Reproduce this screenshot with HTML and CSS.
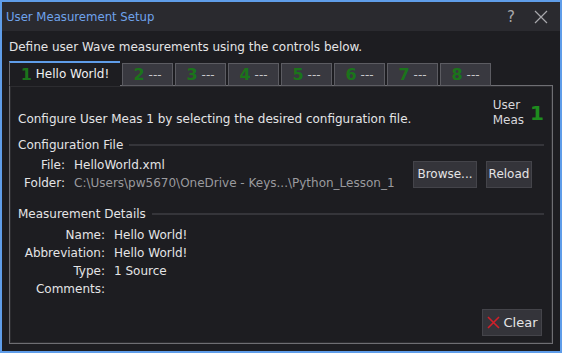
FILE: index.html
```html
<!DOCTYPE html>
<html lang="en">
  <head>
    <meta charset="UTF-8" />
    <title>User Measurement Setup</title>
    <link rel="stylesheet" href="styles.css">
  </head>
  <body>
    <div class="window">
      <div class="titlebar">
        <span class="title">User Measurement Setup</span>
        <span class="help">?</span>
        <svg class="close" width="14" height="14" viewBox="0 0 14 14">
          <path d="M1 1 L13 13 M13 1 L1 13" stroke="#a8a8ac" stroke-width="1.2" fill="none" />
        </svg>
      </div>

      <div class="intro">Define user Wave measurements using the controls below.</div>

      <div class="tabs">
        <div class="tab active"><span class="num">1</span> Hello World!</div>
        <div class="tab"><span class="num">2</span> ---</div>
        <div class="tab"><span class="num">3</span> ---</div>
        <div class="tab"><span class="num">4</span> ---</div>
        <div class="tab"><span class="num">5</span> ---</div>
        <div class="tab"><span class="num">6</span> ---</div>
        <div class="tab"><span class="num">7</span> ---</div>
        <div class="tab"><span class="num">8</span> ---</div>
      </div>

      <div class="panel">
        <div class="header">
          <span class="lead">Configure User Meas 1 by selecting the desired configuration file.</span>
          <div class="badge">
            <span class="badge-label">User<br>Meas</span>
            <span class="badge-num">1</span>
          </div>
        </div>

        <div class="section-title"><span>Configuration File</span></div>
        <div class="config">
          <div class="fields file-fields">
            <span class="label">File:</span>
            <span class="value">HelloWorld.xml</span>
            <span class="label">Folder:</span>
            <span class="value dim">C:\Users\pw5670\OneDrive - Keys...\Python_Lesson_1</span>
          </div>
          <div class="actions">
            <button class="btn browse">Browse...</button>
            <button class="btn reload">Reload</button>
          </div>
        </div>

        <div class="section-title"><span>Measurement Details</span></div>
        <div class="fields detail-fields">
          <span class="label">Name:</span>
          <span class="value">Hello World!</span>
          <span class="label">Abbreviation:</span>
          <span class="value">Hello World!</span>
          <span class="label">Type:</span>
          <span class="value">1 Source</span>
          <span class="label">Comments:</span>
          <span class="value"></span>
        </div>

        <div class="footer">
          <button class="btn clear">
            <svg class="clear-icon" width="13" height="13" viewBox="0 0 13 13">
              <path d="M1 1 L12 12 M12 1 L1 12" stroke="#d0202a" stroke-width="1.6" fill="none" />
            </svg>
            Clear
          </button>
        </div>
      </div>
    </div>
  </body>
</html>
```

FILE: styles.css
```css
html,
body {
  width: 100%;
  height: 100%;
  padding: 0;
  margin: 0;
  background-color: #1d1d21;
}

body {
  font-family: "DejaVu Sans", sans-serif;
  font-size: 12px;
  color: #e4e4e6;
}

.window {
  width: 562px;
  height: 353px;
  box-sizing: border-box;
  border: 2px solid #5f9de9;
  background-color: #1d1d21;
  display: flex;
  flex-direction: column;
}

.titlebar {
  height: 29px;
  flex: none;
  background-color: #2a2a2f;
  display: flex;
  align-items: center;
  padding: 0 12px 0 4px;
}

.title {
  font-family: "DejaVu Sans Condensed", "DejaVu Sans", sans-serif;
  color: #6fa3ec;
  font-size: 13px;
  flex: 1;
}

.help {
  color: #a8a8ac;
  font-size: 15px;
  margin-right: 19px;
}

.intro {
  padding: 9px 7px 0 7px;
  height: 22px;
}

.tabs {
  display: flex;
  align-items: flex-end;
  gap: 2px;
  margin: 0 7px;
  height: 24px;
  position: relative;
  z-index: 1;
  margin-bottom: -1px;
}

.tab {
  width: 49px;
  height: 21px;
  box-sizing: content-box;
  border: 1px solid #5c5c62;
  background-color: #393940;
  color: #c8c8cc;
  display: flex;
  align-items: center;
  justify-content: center;
  gap: 4px;
}

.tab.active {
  width: 110px;
  height: 22px;
  border-top: 2px solid #5f9de9;
  border-left-color: #6b6b70;
  border-right: none;
  border-bottom: 1px solid #1d1d21;
  background-color: #1d1d21;
  color: #f0f0f2;
}

.num {
  color: #1b741b;
  font-size: 16px;
  font-weight: bold;
}

.panel {
  flex: 1;
  margin: 0 7px 7px;
  border: 1px solid #6e6e73;
  box-shadow: inset 0 0 0 1px #2c2c30;
  padding: 8px 8px 7px 8px;
  display: flex;
  flex-direction: column;
}

.header {
  display: flex;
  align-items: flex-end;
  justify-content: space-between;
  height: 34px;
  margin-bottom: 9px;
}

.lead {
  padding-bottom: 2px;
}

.badge {
  display: flex;
  align-items: center;
  gap: 6px;
}

.badge-label {
  line-height: 15px;
  color: #d8d8dc;
}

.badge-num {
  color: #1e8c1e;
  font-size: 20px;
  font-weight: bold;
}

.section-title {
  display: flex;
  align-items: center;
  gap: 6px;
  height: 16px;
}

.section-title::after {
  content: "";
  flex: 1;
  height: 2px;
  background-color: #35353a;
}

.config {
  display: flex;
  align-items: center;
  justify-content: space-between;
  padding: 5px 12px 16px 0;
}

.fields {
  display: grid;
  column-gap: 9px;
  row-gap: 4px;
  line-height: 14px;
}

.file-fields {
  grid-template-columns: 47px auto;
}

.detail-fields {
  grid-template-columns: 87px auto;
  padding-top: 6px;
}

.label {
  text-align: right;
}

.dim {
  color: #9a9a9e;
}

.actions {
  display: flex;
  gap: 9px;
}

.btn {
  font-family: inherit;
  font-size: 12px;
  color: #e4e4e6;
  background-color: #34343a;
  border: 1px solid #44444a;
  height: 27px;
  padding: 0;
}

.browse {
  width: 64px;
}

.reload {
  width: 46px;
}

.footer {
  margin-top: auto;
  display: flex;
  justify-content: flex-end;
  padding-right: 2px;
}

.clear {
  display: flex;
  align-items: center;
  justify-content: center;
  gap: 4px;
  width: 60px;
  font-size: 13px;
}

.clear-icon {
  flex: none;
}
```
